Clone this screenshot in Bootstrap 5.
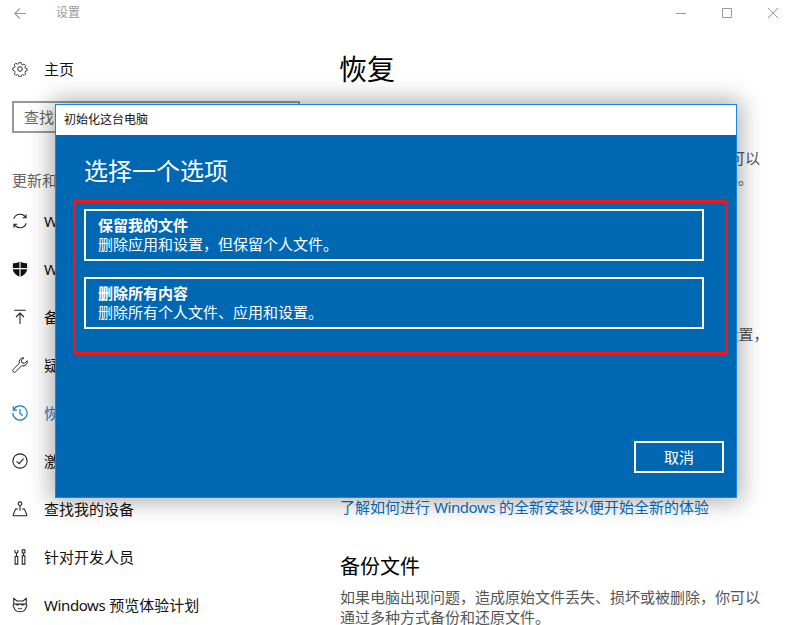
<!DOCTYPE html>
<html lang="zh">
<head>
<meta charset="utf-8">
<title>设置</title>
<link rel="stylesheet" href="https://cdn.jsdelivr.net/npm/bootstrap@5.3.0/dist/css/bootstrap.min.css">
<style>
html,body{height:625px;overflow:hidden;background:#fff;}
body{font-family:"Noto Sans","Noto Sans CJK SC",sans-serif;font-size:15px;line-height:20px;color:#000;position:relative;}
.ws-top{height:26px;color:#999;font-size:12px;}
.ws-back{width:56px;padding-left:14px;}
.ws-ctl{gap:36px;padding-right:15px;}
.ws-side{width:328px;flex:none;padding-top:19px;}
.ws-main{flex:1;padding-left:12px;}
.ws-item{height:48px;padding-left:12px;color:#111;white-space:nowrap;}
.ws-item svg{margin-right:16px;flex:none;}
.ws-item.ws-on{color:#1a7fd4;}
.ws-search{margin:8px 0 0 12px;width:288px;height:32px;border:2px solid #999;padding-left:10px;color:#666;}
.ws-group{color:#666;margin:37px 0 0 12px;height:20px;}
.ws-list{margin-top:7px;}
.ws-lat{letter-spacing:-.4px;}
.ws-title{font-size:28px;line-height:40px;font-weight:400;margin:23px 0 0 -1px;}
.ws-h2{font-size:20px;line-height:28px;font-weight:400;margin:0;}
.ws-h2a{margin-top:23px;}
.ws-h2b{margin-top:100px;}
.ws-h2c{margin-top:36px;}
.ws-p{color:#555;margin:8px 0 0;width:432px;white-space:nowrap;}
.ws-p2{margin-top:6px;}
.ws-link{color:#0a6fc2;text-decoration:none;display:block;margin-top:133px;}
.ws-dlg{left:55px;top:104px;width:682px;height:394px;background:#0067b3;border:1px solid #1787e0;box-shadow:0 0 22px 4px rgba(0,0,0,.32);color:#fff;}
.ws-dlgbar{height:30px;background:#fff;color:#111;font-size:12px;padding-left:8px;}
.ws-dlgh{font-size:24px;line-height:32px;font-weight:400;margin:20px 0 0 28px;}
.ws-red{margin:13px 8px 0 17px;height:155px;border:3px solid #f01616;border-radius:3px;padding:6px 21px 0 8px;}
.ws-opt{display:block;width:100%;height:52px;border:2px solid #fff;border-radius:0;background:transparent;color:#fff;text-align:left;padding:5px 12px;font-size:15px;line-height:19px;margin-bottom:16px;}
.ws-opt b{display:block;font-weight:700;}
.ws-opt:hover{color:#fff;border-color:#fff;}
.ws-cancel{right:12px;bottom:24px;width:90px;height:32px;border:2px solid #fff;border-radius:0;color:#fff;background:transparent;font-size:15px;line-height:20px;padding:4px 0;}
</style>
</head>
<body>
<div class="ws-top d-flex align-items-center">
  <div class="ws-back d-flex align-items-center"><svg width="12" height="11" viewBox="0 0 12 11" fill="none" stroke="#999" stroke-width="1.1"><path d="M12 5.500H1M5.800.5 .8 5.500l5 5"/></svg></div>
  <div class="flex-grow-1">设置</div>
  <div class="ws-ctl d-flex align-items-center">
    <svg width="10" height="10" viewBox="0 0 10 10" stroke="#999" fill="none"><path d="M0 5.500h10"/></svg>
    <svg width="10" height="10" viewBox="0 0 10 10" stroke="#999" fill="none"><path d="M.5.5h9v9h-9z"/></svg>
    <svg width="10" height="10" viewBox="0 0 10 10" stroke="#999" fill="none"><path d="M0 0l10 10M10 0L0 10"/></svg>
  </div>
</div>
<div class="d-flex">
  <aside class="ws-side">
    <div class="ws-item d-flex align-items-center">
      <svg width="16" height="16" viewBox="0 0 18 18" fill="none" stroke="#222" stroke-width="1.100"><circle cx="9" cy="9" r="2.600"/><path d="M7.600 1h2.800l.4 2.100 1.500.7 1.900-1.100 2 2-1.100 1.900.7 1.500 2.100.4v2.800l-2.100.4-.7 1.500 1.100 1.900-2 2-1.900-1.100-1.500.7-.4 2.100H7.600l-.4-2.100-1.500-.7-1.900 1.100-2-2 1.100-1.900-.7-1.500L.1 10.400V7.600l2.100-.4.7-1.500-1.100-1.900 2-2 1.900 1.100 1.500-.7z" transform="translate(.9 .9) scale(.9)"/></svg>
      <span>主页</span>
    </div>
    <div class="ws-search d-flex align-items-center">查找设置</div>
    <div class="ws-group">更新和安全</div>
    <div class="ws-list">
      <div class="ws-item d-flex align-items-center">
        <svg width="16" height="16" viewBox="0 0 18 18" fill="none" stroke="#222" stroke-width="1.200"><path d="M2 6.500A7.500 7.500 0 0 1 15.500 5M16 11.500A7.500 7.500 0 0 1 2.500 13M15.800 1.500V5.400H12M2.200 16.500V12.600H6"/></svg>
        <span>Windows 更新</span>
      </div>
      <div class="ws-item d-flex align-items-center">
        <svg width="16" height="16" viewBox="0 0 18 18"><path fill="#111" d="M1 2.600C4 2.600 7 1.800 9 .5c2 1.300 5 2.100 8 2.100v6c0 4-3.200 7.400-8 9-4.800-1.600-8-5-8-9z"/><path stroke="#fff" stroke-width="1.300" d="M9 0v18M0 8.600h18"/></svg>
        <span>Windows 安全中心</span>
      </div>
      <div class="ws-item d-flex align-items-center">
        <svg width="16" height="16" viewBox="0 0 18 18" fill="none" stroke="#222" stroke-width="1.200"><path d="M2.500 1.500h13M9 17V4.500M4.500 9 9 4.500 13.500 9"/></svg>
        <span>备份</span>
      </div>
      <div class="ws-item d-flex align-items-center">
        <svg width="16" height="16" viewBox="0 0 18 18" fill="none" stroke="#222" stroke-width="1.100"><path d="M12.500 1a4.500 4.500 0 0 0-4.200 6L1.400 13.900a1.900 1.900 0 0 0 2.700 2.700L11 9.700A4.500 4.500 0 0 0 17 4.200l-2.900 2.900-3-.6-.6-3L13.400 1z"/></svg>
        <span>疑难解答</span>
      </div>
      <div class="ws-item ws-on d-flex align-items-center">
        <svg width="16" height="16" viewBox="0 0 18 18" fill="none" stroke="#1a7fd4" stroke-width="1.400"><path d="M1.800 5.500A8 8 0 1 1 1 9M1.500 1.500v4.200h4.200M9 4.500V9.500l3.200 2.500"/></svg>
        <span>恢复</span>
      </div>
      <div class="ws-item d-flex align-items-center">
        <svg width="16" height="16" viewBox="0 0 18 18" fill="none" stroke="#222" stroke-width="1.200"><circle cx="9" cy="9" r="8"/><path d="M5.200 9.300 8 12l5-5.600"/></svg>
        <span>激活</span>
      </div>
      <div class="ws-item d-flex align-items-center">
        <svg width="16" height="16" viewBox="0 0 18 18" fill="none" stroke="#222" stroke-width="1.200"><circle cx="9" cy="3" r="2"/><path d="M9 5v6M1 16.500h16M1 16.500l3-7.500h2.800M17 16.500l-3-7.500h-2.800"/></svg>
        <span>查找我的设备</span>
      </div>
      <div class="ws-item d-flex align-items-center">
        <svg width="16" height="16" viewBox="0 0 18 18" fill="none" stroke="#222" stroke-width="1.200"><path d="M3.500 8.500V17h3V8.500zM5 8.500V5M3.300 1.200v2.300L5 5l1.700-1.500V1.200M11.500 7.500V17h3V7.500zM13 7.500V4.500M11.500 1h3v3.500h-3z"/></svg>
        <span>针对开发人员</span>
      </div>
      <div class="ws-item d-flex align-items-center">
        <svg width="16" height="16" viewBox="0 0 18 18" fill="none" stroke="#222" stroke-width="1.200"><path d="M2 1.500 5.500 4.500h7L16 1.500v6.500c1 .8 1 3-.3 3.500-.3 3-2.500 5-6.700 5s-6.400-2-6.700-5C1 11 1 8.800 2 8z"/><path d="M5 9h2.500M10.500 9H13M7 12.500c1 1 3 1 4 0M2.500 8h13"/></svg>
        <span><span class="ws-lat">Windows</span> 预览体验计划</span>
      </div>
    </div>
  </aside>
  <main class="ws-main">
    <h1 class="ws-title">恢复</h1>
    <h2 class="ws-h2 ws-h2a">重置此电脑</h2>
    <p class="ws-p">如果电脑未正常运行，重置电脑可能会解决问题。重置时，可以<br>选择保留个人文件或删除个人文件，然后重新安装 Windows。</p>
    <h2 class="ws-h2 ws-h2b">高级启动</h2>
    <p class="ws-p">通过设备或磁盘（如 U 盘或 DVD）启动，更改电脑的固件设置，<br>更改 Windows 启动设置，或者从系统映像还原 Windows。</p>
    <a class="ws-link" href="#">了解如何进行 <span class="ws-lat">Windows</span> 的全新安装以便开始全新的体验</a>
    <h2 class="ws-h2 ws-h2c">备份文件</h2>
    <p class="ws-p ws-p2">如果电脑出现问题，造成原始文件丢失、损坏或被删除，你可以<br>通过多种方式备份和还原文件。</p>
  </main>
</div>
<section class="ws-dlg position-absolute">
  <div class="ws-dlgbar d-flex align-items-center">初始化这台电脑</div>
  <h2 class="ws-dlgh">选择一个选项</h2>
  <div class="ws-red">
    <button class="btn ws-opt" type="button"><b>保留我的文件</b>删除应用和设置，但保留个人文件。</button>
    <button class="btn ws-opt" type="button"><b>删除所有内容</b>删除所有个人文件、应用和设置。</button>
  </div>
  <button class="btn ws-cancel position-absolute" type="button">取消</button>
</section>
</body>
</html>
